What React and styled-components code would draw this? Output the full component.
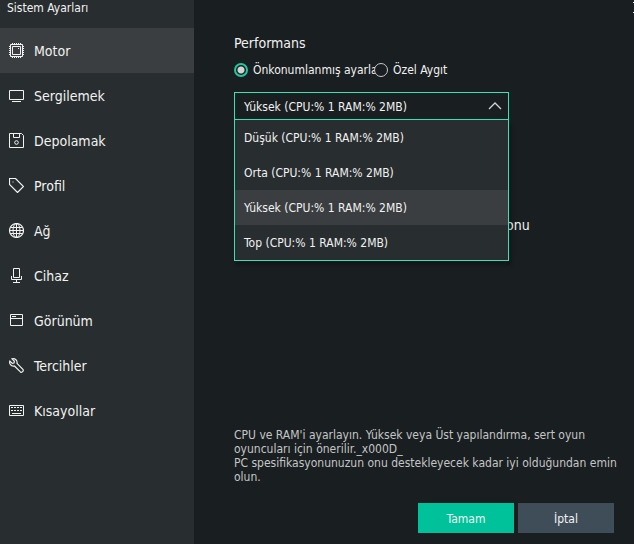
import React, { useState } from "react";
import styled, { createGlobalStyle } from "styled-components";

const GlobalStyle = createGlobalStyle`
  * {
    box-sizing: border-box;
  }
  body {
    margin: 0;
    background: #191e20;
    color: #f2f2f2;
    font-family: Tahoma, "DejaVu Sans Condensed", "Noto Sans", sans-serif;
    font-size: 12px;
  }
  button, select, input {
    font: inherit;
    color: inherit;
  }
`;

const icons = {
  chip: (
    <>
      <path d="M1.5 1.5h12v12h-12zM3.5 3.5h8v8h-8z" />
      <path
        d="M3.5 0v1M5.5 0v1M7.5 0v1M9.5 0v1M11.5 0v1M3.5 14v1M5.5 14v1M7.5 14v1M9.5 14v1M11.5 14v1M0 3.5h1M0 5.5h1M0 7.5h1M0 9.5h1M0 11.5h1M14 3.5h1M14 5.5h1M14 7.5h1M14 9.5h1M14 11.5h1"
      />
      <path d="M9 5.5h1" />
    </>
  ),
  monitor: <path d="M.5 2.5h14v9h-14zM3 13.5h9" />,
  disk: (
    <>
      <path d="M.5.5h12l2 2v12H.5zM4.5.5v4h6v-4" />
      <circle cx="7.5" cy="9.5" r="1.8" />
    </>
  ),
  tag: (
    <>
      <path d="M.5.5h6l8 8-6 6-8-8z" strokeWidth="1.2" />
      <path d="M3.5 4h1" />
    </>
  ),
  globe: (
    <>
      <circle cx="7.5" cy="7.5" r="7" strokeWidth="1.2" />
      <ellipse cx="7.5" cy="7.5" rx="3.5" ry="7" />
      <path d="M1.5 4.5h12M1.5 10.5h12M7.5.5v14M.5 7.5h14" />
    </>
  ),
  mic: <path d="M4.5.5h6v9h-6zM2.5 8v3.5h10V8M7.5 11.5v3M4 14.5h7" />,
  window: <path d="M1.5 1.5h12v11h-12zM1.5 5.5h12M3 3.5h4" />,
  wrench: (
    <path
      d="M3 .9 5.400 3.300 5 5 3.300 5.400.9 3C0 5.500 1.800 8.600 5.400 8l6 5.900c1.500 1.100 3.600-.9 2.500-2.500L8 5.400C8.600 2 5.600 0 3 .9z"
      strokeWidth="1.2"
    />
  ),
  keyboard: (
    <>
      <path d="M.5 2.5h14v10h-14zM3 10.5h9" />
      <path d="M2 4.5h11M2 7.5h11" strokeDasharray="2 1" />
    </>
  ),
};

const menu = [
  { icon: "chip", label: "Motor" },
  { icon: "monitor", label: "Sergilemek" },
  { icon: "disk", label: "Depolamak" },
  { icon: "tag", label: "Profil" },
  { icon: "globe", label: "Ağ" },
  { icon: "mic", label: "Cihaz" },
  { icon: "window", label: "Görünüm" },
  { icon: "wrench", label: "Tercihler" },
  { icon: "keyboard", label: "Kısayollar" },
];

const levels = ["Düşük", "Orta", "Yüksek", "Top"].map(
  (name) => `${name} (CPU:% 1 RAM:% 2MB)`
);

const App = () => {
  const [page, setPage] = useState("Motor");
  const [mode, setMode] = useState("preset");
  const [level, setLevel] = useState(levels[2]);
  const [open, setOpen] = useState(true);

  const toggle = (e) => {
    e.preventDefault();
    setOpen(!open);
  };

  const choose = (value) => {
    setLevel(value);
    setOpen(false);
  };

  return (
    <>
      <GlobalStyle />
      <Window>
        <Sidebar>
          <Title>Sistem Ayarları</Title>
          <nav>
            {menu.map(({ icon, label }) => (
              <MenuItem
                key={label}
                type="button"
                $active={page === label}
                onClick={() => setPage(label)}
              >
                <Icon viewBox="0 0 15 15">{icons[icon]}</Icon>
                {label}
              </MenuItem>
            ))}
          </nav>
        </Sidebar>
        <Main>
          <TopBar>
            <Close type="button" aria-label="Kapat">
              <svg width="11" height="11" viewBox="0 0 11 11">
                <path d="M0 0l11 11M11 0L0 11" stroke="#f2f2f2" />
              </svg>
            </Close>
          </TopBar>
          <Heading>Performans</Heading>
          <Radios>
            <RadioLabel>
              <Radio
                type="radio"
                name="mode"
                checked={mode === "preset"}
                onChange={() => setMode("preset")}
              />
              <span>Önkonumlanmış ayarlar</span>
            </RadioLabel>
            <RadioLabel>
              <Radio
                type="radio"
                name="mode"
                checked={mode === "custom"}
                onChange={() => setMode("custom")}
              />
              <span>Özel Aygıt</span>
            </RadioLabel>
          </Radios>
          <Dropdown>
            <Select
              aria-label="Performans"
              value={level}
              onMouseDown={toggle}
              onChange={(e) => setLevel(e.target.value)}
            >
              {levels.map((item) => (
                <option key={item}>{item}</option>
              ))}
            </Select>
            <Chevron viewBox="0 0 14 8" $open={open}>
              <path d="M1 7l6-6 6 6" />
            </Chevron>
            {open && (
              <List role="listbox" aria-label="Performans">
                {levels.map((item) => (
                  <Option
                    key={item}
                    role="option"
                    aria-selected={item === level}
                    onClick={() => choose(item)}
                  >
                    {item}
                  </Option>
                ))}
              </List>
            )}
          </Dropdown>
          <Version>onu</Version>
          <Hint>
            CPU ve RAM'i ayarlayın. Yüksek veya Üst yapılandırma, sert oyun
            oyuncuları için önerilir._x000D_
            <br />
            PC spesifikasyonunuzun onu destekleyecek kadar iyi olduğundan emin
            olun.
          </Hint>
          <Actions>
            <Button type="button" $primary>
              Tamam
            </Button>
            <Button type="button">İptal</Button>
          </Actions>
        </Main>
      </Window>
    </>
  );
};

const Window = styled.div`
  display: flex;
  min-height: 100vh;
  overflow: hidden;
`;

const Sidebar = styled.aside`
  flex: 0 0 194px;
  background: #282d2f;
`;

const Title = styled.div`
  height: 28px;
  padding-left: 7px;
  line-height: 16px;
`;

const MenuItem = styled.button`
  display: flex;
  align-items: center;
  gap: 10px;
  width: 100%;
  height: 45px;
  padding: 0 9px;
  border: 0;
  background: ${(props) => (props.$active ? "#3a3e40" : "transparent")};
  font-size: 14px;
  text-align: left;
`;

const Icon = styled.svg`
  width: 15px;
  height: 15px;
  fill: none;
  stroke: #f2f2f2;
`;

const Main = styled.main`
  flex: 1;
  min-width: 0;
  display: flex;
  flex-direction: column;
  padding: 0 20px 11px 40px;
`;

const TopBar = styled.div`
  display: flex;
  justify-content: flex-end;
  height: 32px;
  margin-right: -30px;
`;

const Close = styled.button`
  display: flex;
  align-self: flex-start;
  padding: 2px 0;
  border: 0;
  background: none;
`;

const Heading = styled.h1`
  margin: 0;
  font-size: 14px;
  font-weight: normal;
  line-height: 22px;
`;

const Radios = styled.div`
  display: grid;
  grid-template-columns: 140px 1fr;
  padding: 8px 0 14px;
`;

const RadioLabel = styled.label`
  display: flex;
  align-items: center;
  gap: 5px;
  height: 16px;
  min-width: 0;
  white-space: nowrap;
`;

/* the opaque fill hides the end of a long label before it */
const Radio = styled.input`
  appearance: none;
  position: relative;
  flex: none;
  width: 14px;
  height: 14px;
  margin: 0;
  border: 1px solid #c8c8c8;
  border-radius: 50%;
  background: #191e20;
  &:checked {
    border: 2px solid #22c7a0;
    background: radial-gradient(circle, #d4d4d4 3px, #191e20 4px);
  }
`;

const Dropdown = styled.div`
  position: relative;
  z-index: 1;
  width: 275px;
`;

const Select = styled.select`
  appearance: none;
  display: block;
  width: 100%;
  height: 28px;
  padding: 2px 9px 0;
  border: 1px solid #3be0b6;
  border-radius: 0;
  outline: 0;
  background: #191e20;
`;

const Chevron = styled.svg`
  position: absolute;
  top: 10px;
  right: 7px;
  width: 14px;
  height: 8px;
  fill: none;
  stroke: #d4d4d4;
  stroke-width: 1.3;
  pointer-events: none;
  transform: ${(props) => (props.$open ? "none" : "rotate(180deg)")};
`;

const List = styled.ul`
  position: absolute;
  top: 28px;
  left: 0;
  right: 0;
  margin: 0;
  padding: 0;
  border: 1px solid #3be0b6;
  border-top: 0;
  background: #282d2f;
  box-shadow: 2px 4px 4px rgba(0, 0, 0, 0.3);
  list-style: none;
`;

const Option = styled.li`
  padding: 2px 9px 0;
  line-height: 33px;
  cursor: pointer;
  &[aria-selected="true"],
  &:hover {
    background: #3a3e40;
  }
`;

const Version = styled.div`
  margin: 95px 0 0 272px;
  font-size: 14px;
  line-height: 20px;
`;

const Hint = styled.p`
  margin: auto -12px 0 0;
  padding-top: 20px;
  color: #c4c6c6;
  line-height: 14px;
`;

const Actions = styled.div`
  display: flex;
  justify-content: flex-end;
  gap: 4px;
  padding-top: 19px;
`;

const Button = styled.button`
  width: 96px;
  height: 30px;
  padding: 2px 0 0;
  border: 0;
  background: ${(props) => (props.$primary ? "#00c29a" : "#3f4d58")};
`;

export default App;
